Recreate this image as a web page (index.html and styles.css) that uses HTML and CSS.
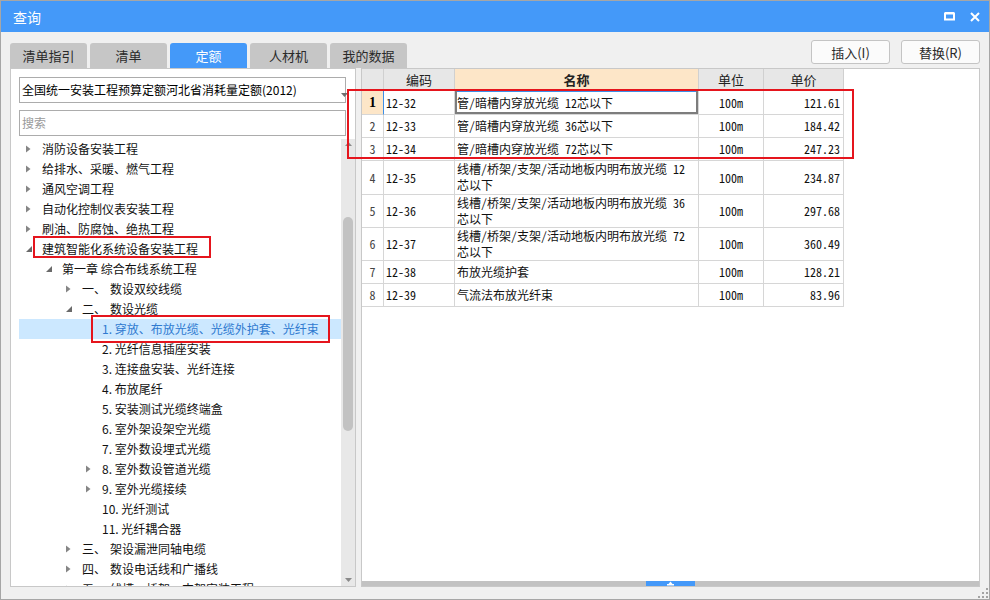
FILE: index.html
```html
<!DOCTYPE html>
<html lang="zh-CN">
<head>
<meta charset="utf-8">
<title>查询</title>
<link rel="stylesheet" href="styles.css">
</head>
<body>
<div class="window">
  <div class="titlebar">
    <span class="title">查询</span>
    <div class="winbtns">
      <svg width="11" height="9" viewBox="0 0 11 9"><rect x="1" y="1.5" width="9" height="6" fill="none" stroke="#fff" stroke-width="2"/><rect x="1" y="0" width="9" height="2" fill="#fff"/></svg>
      <svg width="10" height="10" viewBox="0 0 10 10"><path d="M1 1L9 9M9 1L1 9" stroke="#fff" stroke-width="2" fill="none"/></svg>
    </div>
  </div>

  <div class="toolbar">
    <div class="tabs">
      <div class="tab">清单指引</div>
      <div class="tab">清单</div>
      <div class="tab active">定额</div>
      <div class="tab">人材机</div>
      <div class="tab">我的数据</div>
    </div>
    <div class="actions">
      <button class="btn">插入(I)</button>
      <button class="btn">替换(R)</button>
    </div>
  </div>

  <div class="main">
    <div class="left">
      <div class="select">
        <span class="select-text">全国统一安装工程预算定额河北省消耗量定额(2012)</span>
        <svg class="caret" width="7" height="4" viewBox="0 0 7 4"><path d="M0 0H7L3.5 4Z" fill="#6e6e6e"/></svg>
      </div>
      <div class="search">搜索</div>
      <div class="treewrap">
        <div class="tree">
          <div class="node l0"><span class="tw"><svg width="5" height="8" viewBox="0 0 5 8"><path d="M0 0.5L4.5 4L0 7.5Z" fill="#858585"/></svg></span><span>消防设备安装工程</span></div>
          <div class="node l0"><span class="tw"><svg width="5" height="8" viewBox="0 0 5 8"><path d="M0 0.5L4.5 4L0 7.5Z" fill="#858585"/></svg></span><span>给排水、采暖、燃气工程</span></div>
          <div class="node l0"><span class="tw"><svg width="5" height="8" viewBox="0 0 5 8"><path d="M0 0.5L4.5 4L0 7.5Z" fill="#858585"/></svg></span><span>通风空调工程</span></div>
          <div class="node l0"><span class="tw"><svg width="5" height="8" viewBox="0 0 5 8"><path d="M0 0.5L4.5 4L0 7.5Z" fill="#858585"/></svg></span><span>自动化控制仪表安装工程</span></div>
          <div class="node l0"><span class="tw"><svg width="5" height="8" viewBox="0 0 5 8"><path d="M0 0.5L4.5 4L0 7.5Z" fill="#858585"/></svg></span><span>刷油、防腐蚀、绝热工程</span></div>
          <div class="node l0"><span class="tw"><svg width="6" height="6" viewBox="0 0 6 6"><path d="M6 0V6H0Z" fill="#6a6a6a"/></svg></span><span>建筑智能化系统设备安装工程</span></div>
          <div class="node l1"><span class="tw"><svg width="6" height="6" viewBox="0 0 6 6"><path d="M6 0V6H0Z" fill="#6a6a6a"/></svg></span><span>第一章 综合布线系统工程</span></div>
          <div class="node l2"><span class="tw"><svg width="5" height="8" viewBox="0 0 5 8"><path d="M0 0.5L4.5 4L0 7.5Z" fill="#858585"/></svg></span><span class="ord">一、</span><span>数设双绞线缆</span></div>
          <div class="node l2"><span class="tw"><svg width="6" height="6" viewBox="0 0 6 6"><path d="M6 0V6H0Z" fill="#6a6a6a"/></svg></span><span class="ord">二、</span><span>数设光缆</span></div>
          <div class="node l3 sel"><span class="tw"></span><span>1. 穿放、布放光缆、光缆外护套、光纤束</span></div>
          <div class="node l3"><span class="tw"></span><span>2. 光纤信息插座安装</span></div>
          <div class="node l3"><span class="tw"></span><span>3. 连接盘安装、光纤连接</span></div>
          <div class="node l3"><span class="tw"></span><span>4. 布放尾纤</span></div>
          <div class="node l3"><span class="tw"></span><span>5. 安装测试光缆终端盒</span></div>
          <div class="node l3"><span class="tw"></span><span>6. 室外架设架空光缆</span></div>
          <div class="node l3"><span class="tw"></span><span>7. 室外数设埋式光缆</span></div>
          <div class="node l3"><span class="tw"><svg width="5" height="8" viewBox="0 0 5 8"><path d="M0 0.5L4.5 4L0 7.5Z" fill="#858585"/></svg></span><span>8. 室外数设管道光缆</span></div>
          <div class="node l3"><span class="tw"><svg width="5" height="8" viewBox="0 0 5 8"><path d="M0 0.5L4.5 4L0 7.5Z" fill="#858585"/></svg></span><span>9. 室外光缆接续</span></div>
          <div class="node l3"><span class="tw"></span><span>10. 光纤测试</span></div>
          <div class="node l3"><span class="tw"></span><span>11. 光纤耦合器</span></div>
          <div class="node l2"><span class="tw"><svg width="5" height="8" viewBox="0 0 5 8"><path d="M0 0.5L4.5 4L0 7.5Z" fill="#858585"/></svg></span><span class="ord">三、</span><span>架设漏泄同轴电缆</span></div>
          <div class="node l2"><span class="tw"><svg width="5" height="8" viewBox="0 0 5 8"><path d="M0 0.5L4.5 4L0 7.5Z" fill="#858585"/></svg></span><span class="ord">四、</span><span>数设电话线和广播线</span></div>
          <div class="node l2"><span class="tw"><svg width="5" height="8" viewBox="0 0 5 8"><path d="M0 0.5L4.5 4L0 7.5Z" fill="#858585"/></svg></span><span class="ord">五、</span><span>线槽、桥架、支架安装工程</span></div>
        </div>
        <div class="vscroll">
          <svg class="sc-up" width="7" height="4" viewBox="0 0 7 4"><path d="M0 4H7L3.5 0Z" fill="#8a8a8a"/></svg>
          <div class="thumb"></div>
          <svg class="sc-down" width="7" height="4" viewBox="0 0 7 4"><path d="M0 0H7L3.5 4Z" fill="#8a8a8a"/></svg>
        </div>
      </div>
    </div>

    <div class="right">
      <div class="gridarea">
        <div class="grid">
          <div class="c h"></div><div class="c h">编码</div><div class="c h hl">名称</div><div class="c h">单位</div><div class="c h">单价</div>

          <div class="c n cur">1</div><div class="c code">12-32</div><div class="c name focus">管/暗槽内穿放光缆 12芯以下</div><div class="c unit">100m</div><div class="c price">121.61</div>
          <div class="c n">2</div><div class="c code">12-33</div><div class="c name">管/暗槽内穿放光缆 36芯以下</div><div class="c unit">100m</div><div class="c price">184.42</div>
          <div class="c n">3</div><div class="c code">12-34</div><div class="c name">管/暗槽内穿放光缆 72芯以下</div><div class="c unit">100m</div><div class="c price">247.23</div>
          <div class="c n">4</div><div class="c code">12-35</div><div class="c name two">线槽/桥架/支架/活动地板内明布放光缆 12<br>芯以下</div><div class="c unit">100m</div><div class="c price">234.87</div>
          <div class="c n">5</div><div class="c code">12-36</div><div class="c name two">线槽/桥架/支架/活动地板内明布放光缆 36<br>芯以下</div><div class="c unit">100m</div><div class="c price">297.68</div>
          <div class="c n">6</div><div class="c code">12-37</div><div class="c name two">线槽/桥架/支架/活动地板内明布放光缆 72<br>芯以下</div><div class="c unit">100m</div><div class="c price">360.49</div>
          <div class="c n">7</div><div class="c code">12-38</div><div class="c name">布放光缆护套</div><div class="c unit">100m</div><div class="c price">128.21</div>
          <div class="c n">8</div><div class="c code">12-39</div><div class="c name">气流法布放光纤束</div><div class="c unit">100m</div><div class="c price">83.96</div>
        </div>
      </div>
      <div class="hbar">
        <div class="handle"><svg width="7" height="5" viewBox="0 0 7 5"><path d="M1.5 3L3.5 0.5L5.5 3Z" fill="#fff"/><rect x="0" y="3" width="7" height="1.5" fill="#fff"/></svg></div>
      </div>
    </div>
  </div>

  <div class="mark mark-tree"></div>
  <div class="mark mark-sel"></div>
  <div class="mark mark-table"></div>
  <svg class="grip" width="10" height="10" viewBox="0 0 10 10">
    <rect x="8" y="0" width="2" height="2" fill="#a3a3a3"/>
    <rect x="4" y="4" width="2" height="2" fill="#a3a3a3"/>
    <rect x="8" y="4" width="2" height="2" fill="#a3a3a3"/>
    <rect x="0" y="8" width="2" height="2" fill="#a3a3a3"/>
    <rect x="4" y="8" width="2" height="2" fill="#a3a3a3"/>
    <rect x="8" y="8" width="2" height="2" fill="#a3a3a3"/>
  </svg>
</div>
</body>
</html>
```

FILE: styles.css
```css
* { box-sizing: border-box; }
html, body { margin: 0; padding: 0; }
body {
  font-family: "Noto Sans CJK SC", "Noto Sans", sans-serif;
  font-size: 12px;
  color: #1a1a1a;
  background: #f0f0f0;
}

.window {
  position: relative;
  width: 990px;
  height: 600px;
  border: 1px solid #a6a6a6;
  background: #f0f0f0;
  display: flex;
  flex-direction: column;
  overflow: hidden;
}

/* title bar */
.titlebar {
  flex: none;
  height: 31px;
  background: #4499f9;
  display: flex;
  align-items: center;
  padding: 0 9px 0 12px;
}
.title { color: #fff; font-size: 14px; line-height: 20px; }
.winbtns { margin-left: auto; display: flex; align-items: center; gap: 15px; }

/* tabs + buttons */
.toolbar {
  flex: none;
  height: 36px;
  display: flex;
  padding: 0 9px;
}
.tabs { display: flex; gap: 3px; align-self: flex-end; }
.tab {
  width: 77px;
  height: 25px;
  line-height: 25px;
  text-align: center;
  font-size: 13px;
  color: #2a2a2a;
  background: #c6c6c6;
  border-radius: 3px 3px 0 0;
}
.tab.active { background: #4499f9; color: #fff; }
.actions { margin-left: auto; margin-top: 8px; display: flex; gap: 11px; align-self: flex-start; }
.btn {
  width: 79px;
  height: 24px;
  padding: 0;
  border: 1px solid #c4c4c4;
  border-radius: 3px;
  background: #fbfbfb;
  font-family: inherit;
  font-size: 13px;
  color: #2a2a2a;
}

/* main area */
.main {
  flex: none;
  height: 519px;
  display: flex;
  gap: 5px;
  padding: 0 9px;
}
.left {
  width: 346px;
  flex: none;
  background: #fff;
  border: 1px solid #c8c8c8;
  padding: 8px 0 0 8px;
  display: flex;
  flex-direction: column;
}
.select {
  width: 327px;
  height: 26px;
  flex: none;
  border: 1px solid #acacac;
  display: flex;
  align-items: center;
  padding-left: 2px;
  color: #000;
}
.select-text { flex: 1; white-space: nowrap; line-height: 16px; }
.caret { margin: 10px -3px 0 0; }
.search {
  width: 327px;
  height: 26px;
  flex: none;
  margin-top: 7px;
  border: 1px solid #acacac;
  padding-left: 2px;
  line-height: 24px;
  color: #9a9a9a;
}
.treewrap {
  margin-top: 3px;
  flex: 1;
  min-height: 0;
  display: flex;
  overflow: hidden;
}
.tree { flex: 1; overflow: hidden; }
.node {
  height: 20px;
  display: flex;
  align-items: center;
  white-space: nowrap;
  line-height: 20px;
  color: #111;
}
.node.l0 { padding-left: 7px; }
.node.l1 { padding-left: 27px; }
.node.l2 { padding-left: 47px; }
.node.l3 { padding-left: 67px; }
.tw { width: 16px; flex: none; display: flex; align-items: center; }
.ord { display: inline-block; width: 28px; }
.node.sel { background: #cce8ff; color: #2f7ad0; }

.vscroll {
  width: 14px;
  flex: none;
  background: #e8e8e8;
  display: flex;
  flex-direction: column;
  align-items: center;
}
.sc-up { margin-top: 3px; }
.thumb {
  width: 10px;
  height: 214px;
  margin-top: 71px;
  background: #c2c2c2;
  border-radius: 5px;
}
.sc-down { margin-top: auto; margin-bottom: 4px; }

/* right grid */
.right {
  flex: 1;
  background: #fff;
  border: 1px solid #c8c8c8;
  display: flex;
  flex-direction: column;
}
.gridarea { flex: 1; }
.grid {
  display: grid;
  width: 482px;
  grid-template-columns: 22px 71px 244px 65px 80px;
  grid-template-rows: 22px 24px 23px 23px 34px 33px 33px 23px 23px;
}
.c {
  border-right: 1px solid #d6d6d6;
  border-bottom: 1px solid #d6d6d6;
  display: flex;
  align-items: center;
  font-family: "Noto Sans Mono CJK SC", "Noto Sans CJK SC", monospace;
  font-size: 12px;
  line-height: 16px;
  color: #111;
  overflow: hidden;
  white-space: nowrap;
}
.h {
  background: #e7e7e7;
  justify-content: center;
  font-family: "Noto Sans CJK SC", sans-serif;
  font-size: 13px;
  color: #222;
  border-color: #d0d0d0;
}
.h.hl { background: #fde6c8; font-weight: bold; }
.n { justify-content: center; color: #444; }
.n.cur {
  background: #fde6c8;
  font-family: "Liberation Serif", serif;
  font-weight: bold;
  font-size: 14px;
  color: #000;
  border-right-color: #3d8fe8;
}
.code { padding-left: 2px; }
.name { padding-left: 2px; }
.name.two { align-items: flex-start; padding-top: 0; white-space: normal; }
.unit { justify-content: center; }
.price { justify-content: flex-end; padding-right: 3px; }
.focus {
  box-shadow: inset 2px 0 0 #7d7d7d, inset -2px 0 0 #7d7d7d, inset 0 -2px 0 #7d7d7d, inset 0 1px 0 #3d8fe8;
}

.hbar {
  flex: none;
  height: 5px;
  background: #c2c2c2;
  display: flex;
  justify-content: center;
}
.handle {
  width: 49px;
  height: 5px;
  background: #4499f9;
  display: flex;
  justify-content: center;
  align-items: flex-end;
}
.handle svg { display: block; }

/* red annotation boxes */
.mark {
  position: absolute;
  border: 2px solid #e5151d;
}
.mark-tree { left: 32px; top: 235px; width: 178px; height: 22px; }
.mark-sel { left: 90px; top: 314px; width: 239px; height: 28px; }
.mark-table { left: 346px; top: 88px; width: 507px; height: 70px; }

.grip { position: absolute; right: 1px; bottom: 1px; }
```
